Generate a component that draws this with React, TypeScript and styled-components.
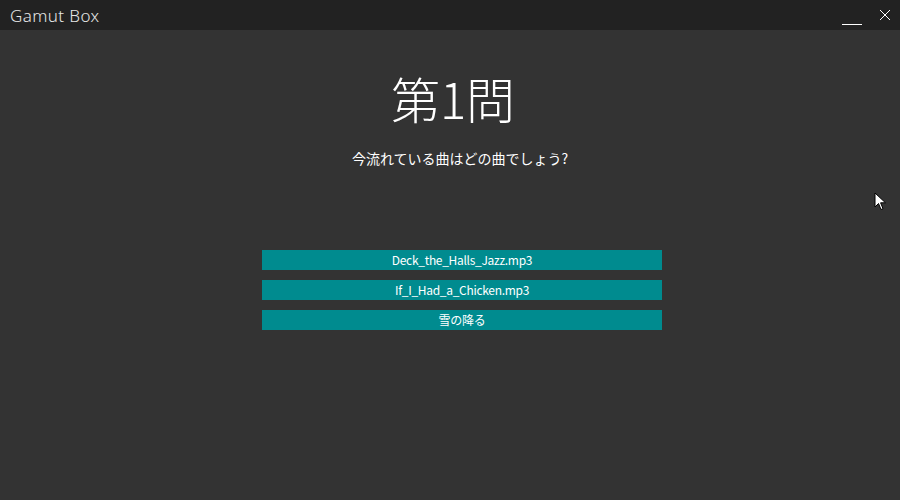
import React from "react";
import styled, { createGlobalStyle } from "styled-components";

const Global = createGlobalStyle`
  html, body { margin: 0; padding: 0; background: #333333; }
  body { font-family: "Noto Sans CJK JP", "Noto Sans", sans-serif; }
`;

const Window = styled.div`
  width: 900px;
  height: 500px;
  background: #333333;
  display: flex;
  flex-direction: column;
  position: relative;
  overflow: hidden;
`;

const TitleBar = styled.div`
  height: 30px;
  background: #222222;
  display: flex;
  align-items: center;
  justify-content: space-between;
  padding-left: 10px;
  box-sizing: border-box;
`;

const AppName = styled.div`
  color: #e6e6e6;
  font-family: "Noto Sans", sans-serif;
  font-weight: 300;
  font-size: 17px;
  letter-spacing: 0.4px;
  margin-top: 0px;
`;

const Controls = styled.div`
  display: flex;
  align-items: center;
  height: 30px;
`;

const CtrlButton = styled.div<{ $w: number }>`
  width: ${(p) => p.$w}px;
  height: 30px;
  display: flex;
  align-items: center;
  justify-content: center;
`;

const Content = styled.div`
  flex: 1;
  display: flex;
  flex-direction: column;
  align-items: center;
  padding-left: 24px;
`;

const Heading = styled.div`
  margin-top: 38px;
  margin-right: 18px;
  color: #ffffff;
  font-size: 49px;
  font-weight: 300;
  line-height: 60px;
  height: 60px;
`;

const Question = styled.div`
  margin-top: 21px;
  margin-right: 4px;
  color: #ffffff;
  font-size: 14px;
  line-height: 19px;
`;

const Choices = styled.div`
  margin-top: 82px;
  display: flex;
  flex-direction: column;
  gap: 10px;
`;

const Choice = styled.button`
  width: 400px;
  height: 20px;
  border: none;
  padding: 0;
  background: #008b8f;
  color: #ffffff;
  font-family: "Noto Sans CJK JP", "Noto Sans", sans-serif;
  font-size: 12px;
  line-height: 20px;
  letter-spacing: -0.3px;
  cursor: default;
`;

const Cursor = styled.svg`
  position: absolute;
  left: 874px;
  top: 192px;
`;

export default function App() {
  const choices = ["Deck_the_Halls_Jazz.mp3", "If_I_Had_a_Chicken.mp3", "雪の降る"];
  return (
    <Window>
      <Global />
      <TitleBar>
        <AppName>Gamut Box</AppName>
        <Controls>
          <CtrlButton $w={36}>
            <svg width="20" height="30" viewBox="0 0 20 30">
              <rect x="0" y="24" width="20" height="1" fill="#ffffff" />
            </svg>
          </CtrlButton>
          <CtrlButton $w={30}>
            <svg width="12" height="12" viewBox="0 0 12 12">
              <path d="M1 1 L11 11 M11 1 L1 11" stroke="#ffffff" strokeWidth="1" />
            </svg>
          </CtrlButton>
        </Controls>
      </TitleBar>
      <Content>
        <Heading>第1問</Heading>
        <Question>今流れている曲はどの曲でしょう?</Question>
        <Choices>
          {choices.map((c) => (
            <Choice key={c}>{c}</Choice>
          ))}
        </Choices>
      </Content>
      <Cursor width="14" height="20" viewBox="0 0 14 20">
        <path d="M1 1 L1 15 L4.5 11.5 L7 17.5 L9 16.7 L6.6 10.8 L11.5 10.8 Z" fill="#ffffff" stroke="#000000" strokeWidth="1" />
      </Cursor>
    </Window>
  );
}
